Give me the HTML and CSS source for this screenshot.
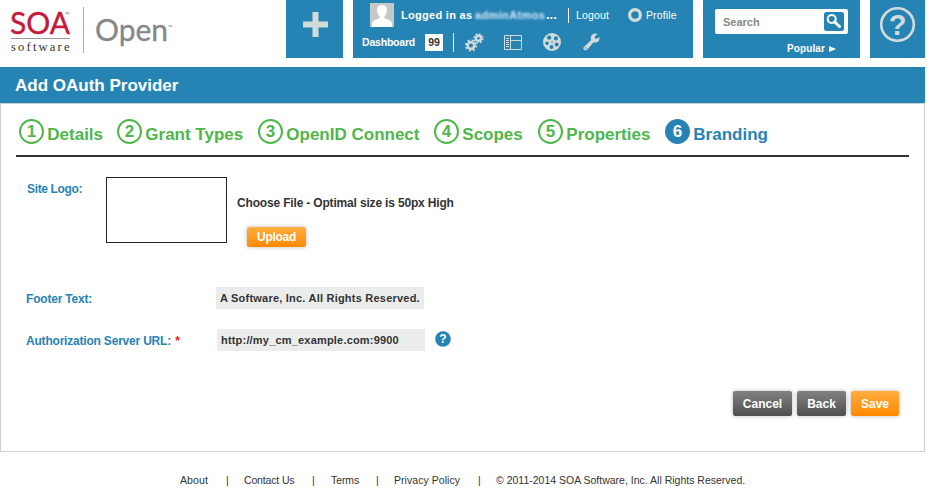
FILE: index.html
```html
<!DOCTYPE html>
<html lang="en">
<head>
<meta charset="utf-8">
<title>Add OAuth Provider</title>
<link rel="stylesheet" href="styles.css">
</head>
<body>
<div class="page">
  <header class="header">
    <svg class="brand" width="286" height="58" viewBox="0 0 286 58">
      <g class="soa">
        <text x="10" y="34" font-size="31" textLength="60" lengthAdjust="spacingAndGlyphs">SOA</text>
        <path class="tm" d="M65 12.500H67M66 12.500V14.500M67.500 14.500V12.500L68.300 13.500 69 12.500V14.500"/>
      </g>
      <path d="M11 38.500H70" stroke="#999"/>
      <text class="software" x="11" y="51" font-size="12.500" textLength="58.500">software</text>
      <path d="M83.500 7V53" stroke="#aaa"/>
      <g class="open">
        <text x="95" y="41" font-size="31.500" textLength="73" lengthAdjust="spacingAndGlyphs">Open</text>
        <path class="tm" d="M168.500 25.500H170M169.300 25.500V27M170.500 27V25.500L171.200 26.300 172 25.500V27"/>
      </g>
    </svg>
    <div class="tile add">
      <svg width="57" height="58" viewBox="0 0 57 58"><path d="M17 24.500H42M29.500 12V37" stroke="#d3dbd9" stroke-width="6"/></svg>
    </div>
    <div class="tile account">
      <div class="account-row user-row">
        <svg class="avatar" width="24" height="24" viewBox="0 0 24 24"><rect width="24" height="24" fill="#c6c8c7"/><path d="M2 24V21Q2 17 8 16L10 14Q7 11 7 7Q7 2 12 2Q17 2 17 7Q17 11 14 14L16 16Q22 17 22 21V24Z" fill="#fff"/></svg>
        <span class="logged">Logged in as</span>
        <span class="username">adminAtmos</span><span class="ellipsis">...</span>
        <span class="divider"></span>
        <span class="logout">Logout</span>
        <svg class="ring" width="14" height="14" viewBox="0 0 14 14"><circle cx="7" cy="7" r="5.400" fill="none" stroke="#d3dbd9" stroke-width="3.200"/></svg>
        <span class="profile">Profile</span>
      </div>
      <div class="account-row tools">
        <span class="dashboard">Dashboard</span>
        <span class="count">99</span>
        <span class="divider"></span>
        <svg class="gears" width="19" height="19" viewBox="0 0 19 19" fill="none" stroke="#d3dbd9">
          <circle cx="6" cy="12.500" r="3.300" stroke-width="2.500"/><circle cx="6" cy="12.500" r="5.100" stroke-width="2" stroke-dasharray="2 2"/>
          <circle cx="13.500" cy="5.300" r="2.600" stroke-width="2.400"/><circle cx="13.500" cy="5.300" r="4.300" stroke-width="1.800" stroke-dasharray="1.700 1.670"/>
        </svg>
        <svg class="table" width="18" height="15" viewBox="0 0 18 15" fill="none" stroke="#d3dbd9"><path d="M.5.5H17.500V14.500H.5ZM6.500 1V14M7 5.500H17M2 3.500H5M2 5.500H5M2 7.500H5M2 9.500H5M2 11.500H5"/></svg>
        <svg class="reel" width="18" height="18" viewBox="0 0 18 18"><circle cx="9" cy="9" r="9" fill="#d3dbd9"/><g fill="#2684b5"><circle cx="6.200" cy="4.700" r="2.100"/><circle cx="12.900" cy="5.400" r="2.100"/><circle cx="4" cy="10.300" r="1.800"/><circle cx="8.500" cy="14" r="2"/><circle cx="13.700" cy="11.500" r="2"/><circle cx="9" cy="9" r=".8"/></g></svg>
        <svg class="wrench" width="17" height="18" viewBox="0 0 17 18"><path d="M14.500.8 11.500 4 13 6.200 16.300 4Q17.100 8 13.900 9.200 12.400 9.900 10.600 9.200L4 16.700Q1.900 18.200.6 16.300-.2 14.700 1.200 13.700L8.200 7Q6.900 3.700 9.500 1.500 11.600-.1 14.500.8Z" fill="#d3dbd9"/><circle cx="2.800" cy="15" r=".8" fill="#2684b5"/></svg>
      </div>
    </div>
    <div class="tile search">
      <div class="search-box"><span>Search</span>
        <svg width="20" height="19" viewBox="0 0 20 19"><rect width="20" height="19" rx="2.500" fill="#2684b5"/><circle cx="7.700" cy="7" r="4" fill="none" stroke="#fff" stroke-width="2"/><path d="M10.700 10 15.500 14.500" stroke="#fff" stroke-width="3" stroke-linecap="round"/></svg>
      </div>
      <div class="popular">Popular <svg width="7" height="6" viewBox="0 0 7 6"><path d="M0 0 7 3 0 6Z" fill="#fff"/></svg></div>
    </div>
    <div class="tile help">
      <svg width="55" height="58" viewBox="0 0 55 58"><circle cx="27.500" cy="24.500" r="16.300" fill="none" stroke="#d3dbd9" stroke-width="2.600"/><text class="mark" x="27.500" y="34.500" font-size="29" text-anchor="middle">?</text></svg>
    </div>
  </header>
  <h1 class="title">Add OAuth Provider</h1>
  <main class="panel">
    <nav class="steps">
      <div class="step"><b>1</b><span>Details</span></div>
      <div class="step"><b>2</b><span>Grant Types</span></div>
      <div class="step"><b>3</b><span>OpenID Connect</span></div>
      <div class="step"><b>4</b><span>Scopes</span></div>
      <div class="step"><b>5</b><span>Properties</span></div>
      <div class="step current"><b>6</b><span>Branding</span></div>
    </nav>
    <section class="logo-row">
      <label class="logo-label">Site Logo:</label>
      <div class="preview"></div>
      <div class="chooser"><p>Choose File - Optimal size is 50px High</p><button class="button orange upload">Upload</button></div>
    </section>
    <section class="field footer-field"><label>Footer Text:</label><div class="input"><span class="footer-value">A Software, Inc. All Rights Reserved.</span></div></section>
    <section class="field url-field"><label>Authorization Server URL: <i>*</i></label><div class="input"><span class="url-value">http://my_cm_example.com:9900</span></div>
      <svg class="hint" width="16" height="16" viewBox="0 0 16 16"><circle cx="8" cy="8" r="7.800" fill="#2684b5"/><text x="8" y="12.300" text-anchor="middle" font-size="12" fill="#fff">?</text></svg>
    </section>
    <div class="actions"><button class="button gray cancel">Cancel</button><button class="button gray back">Back</button><button class="button orange save">Save</button></div>
  </main>
  <footer class="footer"><span class="about">About</span><span class="bar">|</span><span class="contact">Contact Us</span><span class="bar">|</span><span class="terms">Terms</span><span class="bar">|</span><span class="privacy">Privacy Policy</span><span class="bar">|</span><span class="copyright">© 2011-2014 SOA Software, Inc. All Rights Reserved.</span></footer>
</div>
</body>
</html>
```
FILE: styles.css
```css
* { box-sizing: border-box; }
body { margin: 0; background: #fff; color: #333; font-family: "Liberation Sans", sans-serif; font-size: 12px; overflow: hidden; }
.page { width: 925px; height: 491px; white-space: nowrap; }
svg { display: block; flex: none; }
span, label { flex: none; }
.header { height: 67px; display: flex; align-items: flex-start; }
.tile { height: 58px; background: #2684b5; color: #fff; flex: none; }
.brand .soa { font-family: Lato, sans-serif; fill: #c8193c; stroke: #c8193c; stroke-width: .4; }
.brand .tm { fill: none; stroke: #777; stroke-width: .5; }
.brand .software { font-family: "Liberation Serif", serif; fill: #333; }
.brand .open { font-family: Lato, sans-serif; fill: #858789; stroke: #858789; stroke-width: .3; }
.add { width: 57px; margin-right: 10px; }
.account { width: 340px; margin-right: 10px; }
.account-row { display: flex; align-items: center; }
.user-row { height: 30px; padding-left: 17px; font-size: 11px; }
.avatar { margin-top: -1px; }
.logged { width: 74px; margin-left: 7px; font-weight: bold; letter-spacing: .3px; }
.username { width: 71px; font-weight: bold; letter-spacing: .36px; color: #d7eafa; filter: blur(1px); }
.ellipsis { width: 12px; font-weight: bold; font-size: 13px; margin-top: -2px; }
.divider { width: 1px; height: 15px; background: #fff; }
.user-row .divider { margin-left: 10px; }
.logout { width: 33px; margin-left: 7px; font-size: 10.5px; letter-spacing: .15px; }
.ring { margin-left: 19px; margin-right: 4px; }
.profile { font-size: 10.5px; letter-spacing: .12px; }
.tools { height: 24px; padding-left: 9px; }
.dashboard { width: 53px; font-size: 10.5px; font-weight: bold; letter-spacing: -.2px; }
.count { width: 18px; height: 17px; margin-left: 10px; background: #fff; color: #333; text-align: center; line-height: 17px; font-size: 10.5px; font-weight: bold; }
.tools .divider { height: 19px; margin-left: 10px; }
.gears { margin-left: 11px; margin-right: 20px; }
.reel { margin-left: 21px; }
.wrench { margin-left: 22px; }
.search { width: 157px; margin-right: 10px; padding: 9px 12px 0; }
.search-box { height: 25px; background: #fff; border-radius: 2px; display: flex; align-items: center; justify-content: space-between; color: #888; padding: 0 4px 0 8px; font-weight: bold; font-size: 11px; }
.popular { display: flex; align-items: center; justify-content: flex-end; gap: 4px; margin-top: 9px; padding-right: 12px; font-size: 10px; font-weight: bold; line-height: 12px; letter-spacing: .1px; }
.help { width: 55px; }
.mark { font-weight: bold; fill: #d3dbd9; }
.title { height: 36px; margin: 0; padding-left: 15px; background: #2684b5; color: #fff; font-size: 17px; line-height: 37px; }
.panel { height: 349px; border: 1px solid #cbd1d1; padding: 0 15px; }
.steps { height: 53px; border-bottom: 2px solid #333; padding: 15px 0 0 3px; display: grid; grid-template-columns: 98px 141px 176px 104px 127px 110px; }
.step { display: flex; align-items: flex-start; color: #4fb74a; font-size: 17px; font-weight: bold; }
.step b { width: 25px; height: 25px; margin-right: 3.300px; border: 2px solid currentColor; border-radius: 50%; text-align: center; line-height: 22px; flex: none; }
.step span { line-height: 31px; }
.current { color: #2684b5; }
.current b { background: #2684b5; border-color: #2684b5; color: #fff; }
.logo-row { display: flex; height: 85px; margin-top: 20px; padding-left: 11px; }
.logo-label, .field label { color: #2684b5; font-weight: bold; }
.logo-label { width: 79px; margin-top: 5px; letter-spacing: -.35px; }
.preview { width: 121px; height: 66px; border: 1px solid #222; }
.chooser { margin-left: 10px; padding-top: 19px; font-weight: bold; }
.chooser p { margin: 0; line-height: 14px; letter-spacing: -.17px; }
.button { border: 0; padding: 0; border-radius: 2px; color: #fff; font: bold 12px "Liberation Sans", sans-serif; box-shadow: 0 0 4px #bbb; }
.orange { background: linear-gradient(#ffad42, #ff8900); }
.gray { background: linear-gradient(#818181, #505050); }
.upload { display: block; width: 59px; height: 20px; margin: 17px 0 0 10px; letter-spacing: -.3px; }
.field { display: flex; align-items: center; height: 22px; padding-left: 10px; }
.field label { width: 190px; letter-spacing: -.2px; padding-top: 1px; }
.field i { color: #f11; font-style: normal; margin-left: 1px; }
.input { width: 208px; height: 22px; padding-left: 4px; background: #ebeded; line-height: 22px; font-size: 11px; font-weight: bold; }
.footer-value { letter-spacing: .22px; }
.url-value { letter-spacing: .19px; }
.footer-field { margin-top: 25px; }
.url-field { margin-top: 20px; }
.field.url-field label { width: 191px; }
.hint { margin-left: 10px; margin-top: -3px; font-weight: bold; }
.actions { display: flex; justify-content: flex-end; gap: 5px; padding-right: 10px; margin-top: 40px; }
.actions .button { height: 25px; }
.cancel { width: 59px; }
.back { width: 49px; }
.save { width: 48px; }
.footer { display: flex; align-items: center; height: 14px; margin-top: 21px; padding-left: 180px; font-size: 10.500px; color: #333; }
.bar { width: 3px; }
.about { width: 46px; letter-spacing: .1px; }
.contact { width: 68px; margin-left: 15px; letter-spacing: -.15px; }
.terms { width: 45px; margin-left: 16px; letter-spacing: -.1px; }
.privacy { width: 84px; margin-left: 15px; letter-spacing: .05px; }
.copyright { margin-left: 15px; }
```
